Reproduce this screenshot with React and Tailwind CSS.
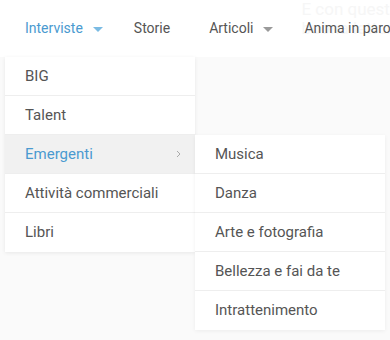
import React from "react";

const mainItems = ["BIG", "Talent", "Emergenti", "Attività commerciali", "Libri"];
const subItems = ["Musica", "Danza", "Arte e fotografia", "Bellezza e fai da te", "Intrattenimento"];

const Caret = ({ color }) => (
  <svg width="10" height="5" viewBox="0 0 10 5" className="ml-[10px] mt-[2px]">
    <path d="M0 0 L10 0 L5 5 Z" fill={color} />
  </svg>
);

const App = () => {
  return (
    <div
      className="relative w-[390px] h-[340px] overflow-hidden bg-[#fafafa] text-[14px] text-[#555]"
      style={{ fontFamily: "Roboto, 'Liberation Sans', sans-serif" }}
    >
      {/* top nav */}
      <div className="relative h-[57px] bg-white flex items-center">
        <div className="flex items-center pl-[25px]">
          <span className="text-[#4a9ad0]">Interviste</span>
          <Caret color="#7bbbe3" />
        </div>
        <div className="ml-[31px]">Storie</div>
        <div className="flex items-center ml-[39px]">
          <span>Articoli</span>
          <Caret color="#9a9a9a" />
        </div>
        <div className="ml-[31px] whitespace-nowrap relative">
          <div className="absolute left-[-3px] top-[-18px] text-[17px] leading-[19px] text-[#f6f6f6] whitespace-nowrap">
            E con queste
            <br />
            buona lettura
          </div>
          <span className="relative">Anima in parole</span>
        </div>
      </div>

      {/* dropdown */}
      <div className="absolute top-[57px] left-[5px] w-[190px] bg-white text-[15px] shadow-[0_1px_4px_rgba(0,0,0,0.08)]">
        {mainItems.map((item, i) => {
          const active = item === "Emergenti";
          return (
            <div
              key={item}
              className={`relative h-[39px] flex items-center justify-between pl-[20px] pr-[14px] ${
                i < mainItems.length - 1 ? "border-b border-[#eeeeee]" : ""
              } ${active ? "bg-[#f1f1f1] text-[#4a9ad0]" : ""}`}
            >
              <span>{item}</span>
              {active && (
                <svg width="5" height="8" viewBox="0 0 5 8">
                  <path d="M1 1 L4 4 L1 7" fill="none" stroke="#aaa" strokeWidth="1" />
                </svg>
              )}
            </div>
          );
        })}

        {/* submenu */}
        <div className="absolute left-full top-[78px] w-[190px] bg-white shadow-[0_1px_4px_rgba(0,0,0,0.06)]">
          {subItems.map((item, i) => (
            <div
              key={item}
              className={`h-[39px] flex items-center pl-[20px] ${
                i < subItems.length - 1 ? "border-b border-[#eeeeee]" : ""
              }`}
            >
              {item}
            </div>
          ))}
        </div>
      </div>
    </div>
  );
};

export default App;
